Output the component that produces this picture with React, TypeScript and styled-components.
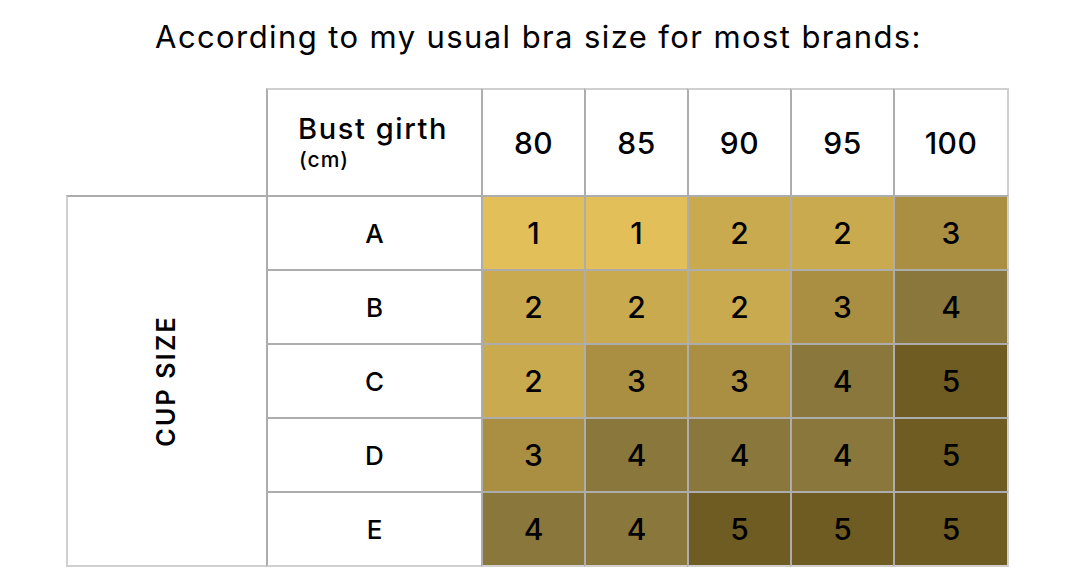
import React from "react";
import styled, { createGlobalStyle } from "styled-components";

const Global = createGlobalStyle`
  html, body { margin: 0; padding: 0; background: #ffffff; }
  body { font-family: Inter, "Noto Sans", "Liberation Sans", sans-serif; color: #000; }
`;

const INNER = "#adadad";
const OUTER = "#d0d0d0";

const Page = styled.div`
  width: 1066px;
  height: 584px;
  display: flex;
  flex-direction: column;
  overflow: hidden;
`;

const Title = styled.h1`
  margin: 0;
  padding-top: 19px;
  height: 69px;
  box-sizing: border-box;
  text-align: center;
  font-family: Inter, "Noto Sans", sans-serif;
  font-weight: 400;
  font-size: 31px;
  line-height: 36px;
  letter-spacing: 1.4px;
  padding-left: 11px;
`;

const TableWrap = styled.div`
  padding-left: 66px;
  padding-top: 19px;
`;

const Grid = styled.div`
  display: grid;
  grid-template-columns: 200px 215px repeat(4, 103px) 116px;
  grid-template-rows: 107px repeat(4, 74px) 76px;
`;

type Edges = {
  $l?: string;
  $t?: string;
  $r?: string;
  $b?: string;
};

const Cell = styled.div<Edges & { $bg?: string }>`
  box-sizing: border-box;
  display: flex;
  align-items: center;
  justify-content: center;
  background: ${(p) => p.$bg || "#ffffff"};
  border-left: ${(p) => (p.$l ? `2px solid ${p.$l}` : "none")};
  border-top: ${(p) => (p.$t ? `2px solid ${p.$t}` : "none")};
  border-right: ${(p) => (p.$r ? `2px solid ${p.$r}` : "none")};
  border-bottom: ${(p) => (p.$b ? `2px solid ${p.$b}` : "none")};
`;

const Corner = styled.div``;

const GirthCell = styled(Cell)`
  justify-content: flex-start;
  padding-left: 30px;
`;

const GirthBlock = styled.div`
  display: flex;
  flex-direction: column;
`;

const GirthLabel = styled.span`
  font-size: 29px;
  font-weight: 500;
  line-height: 34px;
  letter-spacing: 1.6px;
`;

const Unit = styled.span`
  font-size: 21px;
  font-weight: 500;
  line-height: 28px;
  letter-spacing: 1px;
  padding-left: 1px;
`;

const HeadNum = styled.span`
  font-size: 30px;
  font-weight: 500;
  letter-spacing: 0.5px;
`;

const RowLabel = styled.span`
  font-size: 26px;
  font-weight: 500;
`;

const Value = styled.span`
  font-size: 30px;
  font-weight: 500;
`;

const CupCell = styled(Cell)`
  grid-column: 1;
  grid-row: 2 / span 5;
`;

const CupText = styled.span`
  transform: rotate(-90deg);
  white-space: nowrap;
  font-size: 25px;
  font-weight: 600;
  letter-spacing: 2.2px;
  margin-left: -3px;
`;

const girths = ["80", "85", "90", "95", "100"];
const rows: { cup: string; values: number[] }[] = [
  { cup: "A", values: [1, 1, 2, 2, 3] },
  { cup: "B", values: [2, 2, 2, 3, 4] },
  { cup: "C", values: [2, 3, 3, 4, 5] },
  { cup: "D", values: [3, 4, 4, 4, 5] },
  { cup: "E", values: [4, 4, 5, 5, 5] },
];

const shade: Record<number, string> = {
  1: "#e2bf58",
  2: "#c9aa4e",
  3: "#aa8f43",
  4: "#8a773b",
  5: "#6f5c22",
};

export default function App() {
  return (
    <Page>
      <Global />
      <Title>According to my usual bra size for most brands:</Title>
      <TableWrap>
        <Grid>
          <Corner />
          <GirthCell $l={INNER} $t={OUTER}>
            <GirthBlock>
              <GirthLabel>Bust girth</GirthLabel>
              <Unit>(cm)</Unit>
            </GirthBlock>
          </GirthCell>
          {girths.map((g, i) => (
            <Cell
              key={g}
              $l={INNER}
              $t={OUTER}
              $r={i === girths.length - 1 ? OUTER : undefined}
            >
              <HeadNum>{g}</HeadNum>
            </Cell>
          ))}
          <CupCell $l={OUTER} $t={INNER} $b={OUTER}>
            <CupText>CUP SIZE</CupText>
          </CupCell>
          {rows.map((r, ri) => {
            const last = ri === rows.length - 1;
            return (
              <React.Fragment key={r.cup}>
                <Cell $l={INNER} $t={INNER} $b={last ? OUTER : undefined}>
                  <RowLabel>{r.cup}</RowLabel>
                </Cell>
                {r.values.map((v, vi) => (
                  <Cell
                    key={vi}
                    $bg={shade[v]}
                    $l={INNER}
                    $t={INNER}
                    $r={vi === r.values.length - 1 ? OUTER : undefined}
                    $b={last ? OUTER : undefined}
                  >
                    <Value>{v}</Value>
                  </Cell>
                ))}
              </React.Fragment>
            );
          })}
        </Grid>
      </TableWrap>
    </Page>
  );
}
